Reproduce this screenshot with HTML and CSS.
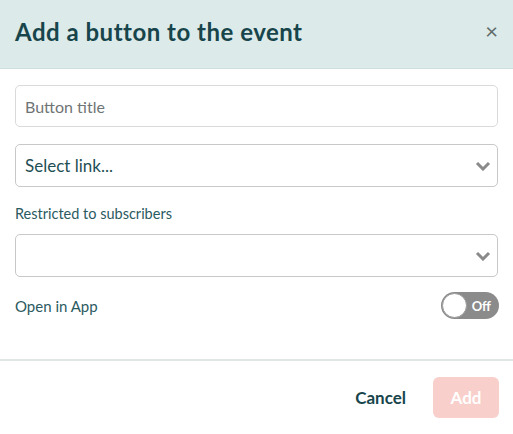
FILE: index.html
```html
<!DOCTYPE html>
<html>
<head>
<meta charset="utf-8">
<link rel="stylesheet" href="styles.css">
</head>
<body>
<div class="modal">
  <div class="header">
    <h1 class="title">Add a button to the event</h1>
    <span class="close">×</span>
  </div>
  <div class="body">
    <div class="input placeholder">Button title</div>
    <div class="select select-first">
      <span class="value">Select link...</span>
      <svg class="chev" width="16" height="10" viewBox="0 0 16 10"><path d="M2 2 L8 8 L14 2" fill="none" stroke="#8a8a8a" stroke-width="3"/></svg>
    </div>
    <div class="label">Restricted to subscribers</div>
    <div class="select">
      <span class="value"></span>
      <svg class="chev" width="16" height="10" viewBox="0 0 16 10"><path d="M2 2 L8 8 L14 2" fill="none" stroke="#8a8a8a" stroke-width="3"/></svg>
    </div>
    <div class="toggle-row">
      <span class="label-inline">Open in App</span>
      <div class="toggle"><span class="knob"></span><span class="off">Off</span></div>
    </div>
  </div>
  <div class="footer">
    <button class="cancel">Cancel</button>
    <button class="add">Add</button>
  </div>
</div>
</body>
</html>
```
FILE: styles.css
```css
* { box-sizing: border-box; }
html, body { margin: 0; padding: 0; background: #fff; }
body { font-family: "Lato", "Open Sans", sans-serif; }
.modal { width: 513px; }
.header {
  height: 69px;
  background: #dcebea;
  border-bottom: 1px solid #cfdfde;
  display: flex;
  align-items: center;
  justify-content: space-between;
  padding: 0 15px 0 15px;
}
.title {
  margin: 0;
  font-size: 24px;
  font-weight: 700;
  color: #17454b;
  letter-spacing: 0.5px;
  padding-bottom: 5px;
}
.close {
  font-size: 22px;
  color: #5f6b6b;
  line-height: 1;
  margin-right: 0;
  padding-bottom: 7px;
}
.body { padding: 16px 15px 0 15px; }
.input {
  height: 42px;
  border: 1px solid #dadada;
  border-radius: 5px;
  display: flex;
  align-items: center;
  padding: 0 9px;
  font-size: 16px;
}
.placeholder { color: #6f7475; }
.select {
  height: 43px;
  border: 1px solid #c8c8c8;
  border-radius: 5px;
  display: flex;
  align-items: center;
  justify-content: space-between;
  padding: 0 6px 0 9px;
  font-size: 17px;
  color: #1f4f55;
}
.select-first { margin-top: 17px; }
.chev { display: block; }
.label {
  margin-top: 18px;
  margin-bottom: 11px;
  font-size: 14.5px;
  color: #2b5a5f;
  line-height: 18px;
}
.toggle-row {
  margin-top: 15px;
  display: flex;
  align-items: center;
  justify-content: space-between;
  height: 27px;
}
.label-inline { font-size: 15px; color: #2b5a5f; }
.toggle {
  width: 58px;
  height: 27px;
  border-radius: 14px;
  background: #8b8b8b;
  position: relative;
  display: flex;
  align-items: center;
  justify-content: flex-end;
  padding-right: 8px;
  margin-right: -1px;
}
.knob {
  position: absolute;
  left: 1px;
  top: 1px;
  width: 25px;
  height: 25px;
  border-radius: 50%;
  background: #fff;
  border: 1px solid #9a9a9a;
}
.off { color: #fff; font-size: 13px; font-weight: 700; }
.footer {
  margin-top: 40px;
  border-top: 2px solid #dfe7e6;
  display: flex;
  justify-content: flex-end;
  align-items: center;
  padding: 16px 14px 0 0;
  gap: 27px;
}
button { font-family: inherit; border: none; cursor: pointer; }
.cancel {
  background: none;
  font-size: 17px;
  font-weight: 700;
  color: #17454b;
  padding: 0;
}
.add {
  width: 66px;
  height: 41px;
  border-radius: 6px;
  background: #f8cfca;
  color: #fff;
  font-size: 17px;
  font-weight: 700;
}
```
